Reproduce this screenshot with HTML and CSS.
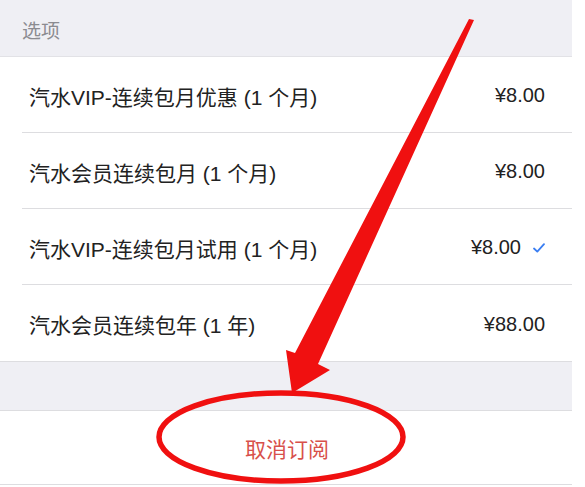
FILE: index.html
```html
<!DOCTYPE html>
<html lang="zh-CN">
<head>
  <meta charset="UTF-8" />
  <meta name="viewport" content="width=device-width, initial-scale=1.0" />
  <title>选项</title>
  <link rel="stylesheet" href="styles.css">
</head>
<body>

  <div class="screen">
    <div class="section-head">选项</div>

    <ul class="options">
      <li class="option">
        <span class="name">汽水VIP-连续包月优惠 (1 个月)</span>
        <span class="price">¥8.00</span>
      </li>
      <li class="option">
        <span class="name">汽水会员连续包月 (1 个月)</span>
        <span class="price">¥8.00</span>
      </li>
      <li class="option selected">
        <span class="name">汽水VIP-连续包月试用 (1 个月)</span>
        <span class="price">¥8.00</span>
        <svg class="check" width="12" height="10" viewBox="0 0 12 10">
          <polyline points="1,5.5 4.3,8.6 11,1.2" fill="none" stroke="#3a7ef2" stroke-width="1.8" stroke-linecap="round" stroke-linejoin="round"/>
        </svg>
      </li>
      <li class="option">
        <span class="name">汽水会员连续包年 (1 年)</span>
        <span class="price">¥88.00</span>
      </li>
    </ul>

    <div class="gap"></div>

    <div class="cancel">取消订阅</div>
  </div>

  <!-- red markup drawn over the screenshot -->
  <svg class="markup" width="585" height="487" viewBox="0 0 585 487">
    <polygon points="469,19 474,20 318,364 330,370 292,393 286,350 295,353" fill="#f01010"/>
    <ellipse cx="281" cy="437" rx="122" ry="44" fill="none" stroke="#f01010" stroke-width="5.5"/>
  </svg>

</body>
</html>
```

FILE: styles.css
```css
/* Global */
* {
  box-sizing: border-box;
}
body {
  margin: 0;
  padding: 0;
  background-color: #fff;
  font-family: "Liberation Sans", "Noto Sans CJK SC", sans-serif;
  color: #222;
  position: relative;
  overflow: hidden;
}

/* Settings screen */
.screen {
  width: 572px;
}
.section-head {
  height: 57px;
  background-color: #efeff4;
  border-bottom: 1px solid #e2e2e6;
  padding: 20px 0 0 22px;
  font-size: 19px;
  line-height: 24px;
  color: #8b8b90;
}

/* Option rows */
.options {
  list-style: none;
  margin: 0;
  padding: 0 0 0 22px;
}
.option {
  display: flex;
  align-items: center;
  height: 76px;
  padding: 2px 27px 0 7px;
  border-bottom: 1px solid #dddde0;
  font-size: 20px;
}
.option:last-child {
  border-bottom: none;
}
.option .name {
  flex: 1;
  font-size: 21px;
}
.option .price {
  color: #222;
}
.option.selected .price {
  margin-right: 12px;
}
.check {
  display: block;
}

/* Grey spacer and cancel button */
.gap {
  height: 50px;
  background-color: #efeff4;
  border-top: 1px solid #dddde0;
  border-bottom: 1px solid #dddde0;
}
.cancel {
  height: 74px;
  border-bottom: 1px solid #dddde0;
  display: flex;
  align-items: center;
  justify-content: center;
  padding-left: 2px;
  font-size: 21px;
  color: #d8504a;
}

/* Annotation layer */
.markup {
  position: absolute;
  top: 0;
  left: 0;
  pointer-events: none;
}
```
